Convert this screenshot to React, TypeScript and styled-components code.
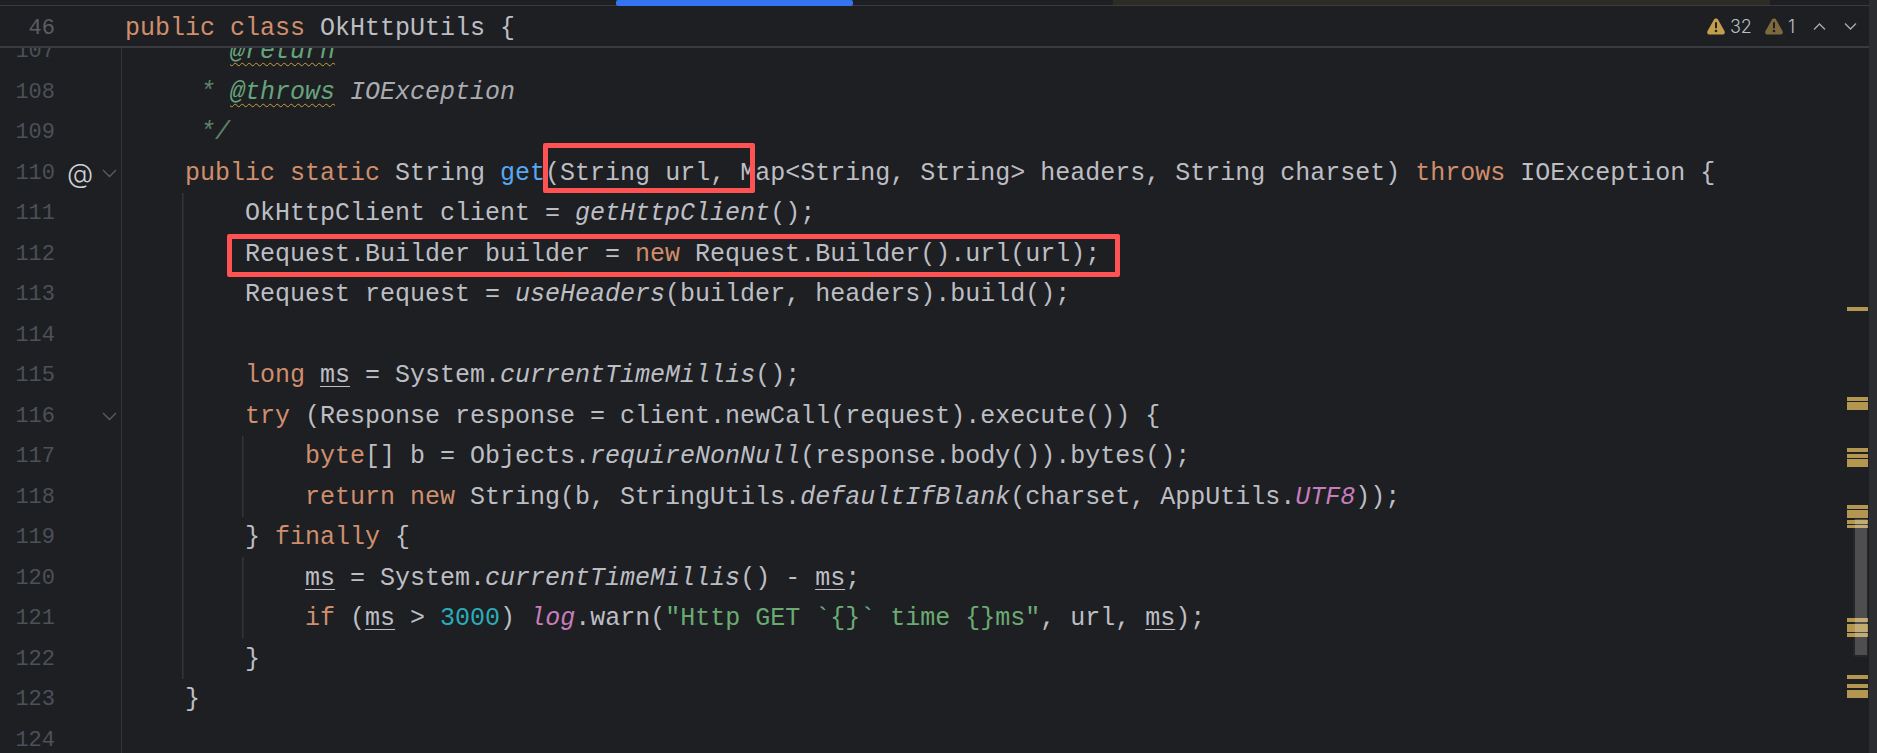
import React from 'react';
import styled, { createGlobalStyle } from 'styled-components';

type Kind = 'plain' | 'kw' | 'fn' | 'call' | 'doc' | 'tag' | 'docref' | 'num' | 'str' | 'field' | 'mut';
type Token = [Kind, string];

interface Line {
    no: number;
    tokens: Token[];
    mark?: boolean;
    fold?: boolean;
    depth?: number;
}

const LINES: Line[] = [
    { no: 107, tokens: [['doc', '     * '], ['tag', '@return']] },
    { no: 108, tokens: [['doc', '     * '], ['tag', '@throws'], ['doc', ' '], ['docref', 'IOException']] },
    { no: 109, tokens: [['doc', '     */']] },
    {
        no: 110, mark: true, fold: true, tokens: [
            ['plain', '    '], ['kw', 'public static '], ['plain', 'String '], ['fn', 'get'],
            ['plain', '(String url, Map<String, String> headers, String charset) '], ['kw', 'throws '], ['plain', 'IOException {'],
        ],
    },
    { no: 111, depth: 1, tokens: [['plain', '        OkHttpClient client = '], ['call', 'getHttpClient'], ['plain', '();']] },
    { no: 112, depth: 1, tokens: [['plain', '        Request.Builder builder = '], ['kw', 'new '], ['plain', 'Request.Builder().url(url);']] },
    { no: 113, depth: 1, tokens: [['plain', '        Request request = '], ['call', 'useHeaders'], ['plain', '(builder, headers).build();']] },
    { no: 114, depth: 1, tokens: [] },
    { no: 115, depth: 1, tokens: [['plain', '        '], ['kw', 'long '], ['mut', 'ms'], ['plain', ' = System.'], ['call', 'currentTimeMillis'], ['plain', '();']] },
    { no: 116, depth: 1, fold: true, tokens: [['plain', '        '], ['kw', 'try '], ['plain', '(Response response = client.newCall(request).execute()) {']] },
    {
        no: 117, depth: 2, tokens: [
            ['plain', '            '], ['kw', 'byte'], ['plain', '[] b = Objects.'], ['call', 'requireNonNull'], ['plain', '(response.body()).bytes();'],
        ],
    },
    {
        no: 118, depth: 2, tokens: [
            ['plain', '            '], ['kw', 'return new '], ['plain', 'String(b, StringUtils.'], ['call', 'defaultIfBlank'],
            ['plain', '(charset, AppUtils.'], ['field', 'UTF8'], ['plain', '));'],
        ],
    },
    { no: 119, depth: 1, tokens: [['plain', '        } '], ['kw', 'finally '], ['plain', '{']] },
    {
        no: 120, depth: 2, tokens: [
            ['plain', '            '], ['mut', 'ms'], ['plain', ' = System.'], ['call', 'currentTimeMillis'], ['plain', '() - '], ['mut', 'ms'], ['plain', ';'],
        ],
    },
    {
        no: 121, depth: 2, tokens: [
            ['plain', '            '], ['kw', 'if '], ['plain', '('], ['mut', 'ms'], ['plain', ' > '], ['num', '3000'], ['plain', ') '], ['field', 'log'],
            ['plain', '.warn('], ['str', '"Http GET `{}` time {}ms"'], ['plain', ', url, '], ['mut', 'ms'], ['plain', ');'],
        ],
    },
    { no: 122, depth: 1, tokens: [['plain', '        }']] },
    { no: 123, tokens: [['plain', '    }']] },
    { no: 124, tokens: [] },
    { no: 125, tokens: [] },
];

// warning stripes on the error stripe: [top, height]
const STRIPES: [number, number][] = [
    [307, 4], [397, 4], [402, 4], [406, 4], [448, 4], [454, 4], [459, 4], [463, 4],
    [505, 4], [510, 4], [514, 4], [520, 4], [525, 3], [618, 4], [624, 4], [628, 4], [633, 4],
    [675, 4], [684, 4], [690, 4], [694, 4],
];

const GlobalStyle = createGlobalStyle`
    html, body {
        margin: 0;
        height: 100%;
        background: #1e1f22;
        overflow: hidden;
    }
`;

const Page = styled.div`
    position: relative;
    width: 1877px;
    height: 753px;
    display: grid;
    grid-template-columns: 1869px 8px;
    background: #1e1f22;
    overflow: hidden;
    font-family: "Liberation Mono", monospace;
`;

const Editor = styled.div`
    display: flex;
    flex-direction: column;
    min-width: 0;
    height: 753px;
`;

const TabStrip = styled.div`
    flex: none;
    height: 5px;
    display: flex;
    border-bottom: 1px solid #393b40;
    padding-left: 616px;
`;

const ActiveTab = styled.div`
    width: 237px;
    height: 6px;
    background: #3574f0;
    border-radius: 2px;
`;

const TabGap = styled.div`
    width: 260px;
`;

const OtherTabs = styled.div`
    width: 657px;
    background: #2e2a24;
`;

const StickyHeader = styled.div`
    flex: none;
    height: 40px;
    display: flex;
    align-items: center;
    border-bottom: 2px solid #393b40;
    font-size: 25px;
`;

const HeaderNumber = styled.div`
    width: 55px;
    flex: none;
    margin-top: 5px;
    text-align: right;
    font-size: 22px;
    color: #5a5d63;
`;

const HeaderCode = styled.div`
    margin: 5px 0 0 70px;
    flex: 1;
    white-space: pre;
`;

const Inspections = styled.div`
    display: flex;
    align-items: center;
    margin-right: 12px;
    font-family: "Inter", "Liberation Sans", sans-serif;
    font-size: 18px;
    font-weight: 300;
    color: #bcbec4;
`;

const Count = styled.span`
    margin: 0 13px 0 5px;
    &:last-of-type {
        margin-right: 0;
    }
`;

const Arrow = styled.svg`
    display: block;
    margin-left: 18px;
`;

const Viewport = styled.div`
    flex: 1;
    overflow: hidden;
    min-height: 0;
`;

const Rows = styled.div`
    margin-top: -17.5px;
`;

const Row = styled.div`
    height: 40.5px;
    display: flex;
    align-items: center;
`;

const Gutter = styled.div`
    flex: none;
    width: 122px;
    height: 100%;
    display: flex;
    align-items: center;
    box-sizing: border-box;
    padding-top: 2px;
    border-right: 1.5px solid #313438;
    margin-right: 3px;
`;

const Number = styled.div`
    width: 55px;
    flex: none;
    text-align: right;
    font-size: 22px;
    color: #4b5059;
`;

const GutterMark = styled.div`
    width: 47px;
    flex: none;
    margin-left: 12px;
    font-family: "Inter", "Liberation Sans", sans-serif;
    font-size: 27px;
    font-weight: 300;
    line-height: 27px;
    color: #ced0d6;
`;

const FoldArrow = styled.svg`
    display: block;
    flex: none;
    margin-left: -12px;
`;

const Code = styled.div<{ $depth: number }>`
    flex: 1;
    height: 100%;
    box-sizing: border-box;
    padding-top: 2px;
    display: flex;
    align-items: center;
    white-space: pre;
    font-size: 25px;
    background-repeat: no-repeat;
    background-image:
        ${p => (p.$depth > 0 ? 'linear-gradient(#313438, #313438)' : 'none')},
        ${p => (p.$depth > 1 ? 'linear-gradient(#313438, #313438)' : 'none')};
    background-size: 1.5px 100%, 1.5px 100%;
    background-position: 57px 0, 117px 0;
`;

const Tok = styled.span<{ $kind: Kind }>`
    color: ${p => ({
        plain: '#bcbec4',
        kw: '#cf8e6d',
        fn: '#56a8f5',
        call: '#bcbec4',
        doc: '#5f826b',
        tag: '#67a37c',
        docref: '#a9abb1',
        num: '#2aacb8',
        str: '#6aab73',
        field: '#c77dbb',
        mut: '#bcbec4',
    }[p.$kind])};
    font-style: ${p => (['call', 'doc', 'tag', 'docref', 'field'].includes(p.$kind) ? 'italic' : 'normal')};
    text-decoration: ${p => (p.$kind === 'mut'
        ? 'underline 1px #bcbec4'
        : p.$kind === 'tag' ? 'underline wavy 1px #c4a23e' : 'none')};
    text-underline-offset: 4px;
`;

const Scrollbar = styled.div`
    background: #2b2d30;
`;

const Stripe = styled.div`
    position: absolute;
    left: 1847px;
    width: 21px;
    background: #b3964f;
`;

const ThumbHalo = styled.div`
    position: absolute;
    left: 1853px;
    top: 518px;
    width: 15px;
    height: 139px;
    background: rgba(255, 255, 255, 0.03);
    border-radius: 2px;
`;

const Thumb = styled.div`
    position: absolute;
    left: 1855px;
    top: 519px;
    width: 12px;
    height: 136px;
    background: rgba(255, 255, 255, 0.19);
`;

const RedBox = styled.div<{ $left: number; $top: number; $width: number; $height: number }>`
    position: absolute;
    left: ${p => p.$left}px;
    top: ${p => p.$top}px;
    width: ${p => p.$width}px;
    height: ${p => p.$height}px;
    box-sizing: border-box;
    border: 5px solid #ff5252;
    border-radius: 2px;
`;

function WarnIcon({ color }: { color: string }) {
    return (
        <svg width="18" height="17" viewBox="0 0 18 17">
            <path
                d="M9 0.5c1 0 1.8 0.5 2.3 1.4l6.2 11.2c1 1.8-0.2 3.4-2.1 3.4H2.6c-1.9 0-3.1-1.6-2.1-3.4L6.7 1.9C7.2 1 8 0.5 9 0.5z"
                fill={color}
            />
            <rect x="8" y="4" width="2" height="6.5" rx="1" fill="#1e1f22" />
            <circle cx="9" cy="13" r="1.3" fill="#1e1f22" />
        </svg>
    );
}

function Chevron({ up }: { up?: boolean }) {
    return (
        <Arrow width="13" height="9" viewBox="0 0 13 9">
            <path
                d={up ? 'M1 7.5L6.5 2 12 7.5' : 'M1 1.5L6.5 7 12 1.5'}
                fill="none"
                stroke="#a8aab0"
                strokeWidth="1.4"
            />
        </Arrow>
    );
}

function CodeLine({ line }: { line: Line }) {
    return (
        <Row>
            <Gutter>
                <Number>{line.no}</Number>
                <GutterMark>{line.mark ? '@' : ''}</GutterMark>
                {line.fold && (
                    <FoldArrow width="15" height="9" viewBox="0 0 15 9">
                        <path d="M1 1l6.5 6.5L14 1" fill="none" stroke="#5a5d63" strokeWidth="1.3" />
                    </FoldArrow>
                )}
            </Gutter>
            <Code $depth={line.depth || 0}>
                {line.tokens.map((t, i) => (<Tok key={i} $kind={t[0]}>{t[1]}</Tok>))}
            </Code>
        </Row>
    );
}

export default function App() {
    return (
        <Page>
            <GlobalStyle />
            <Editor>
                <TabStrip>
                    <ActiveTab />
                    <TabGap />
                    <OtherTabs />
                </TabStrip>
                <StickyHeader>
                    <HeaderNumber>46</HeaderNumber>
                    <HeaderCode>
                        <Tok $kind="kw">public class </Tok>
                        <Tok $kind="plain">OkHttpUtils {'{'}</Tok>
                    </HeaderCode>
                    <Inspections>
                        <WarnIcon color="#c29e4a" />
                        <Count>32</Count>
                        <WarnIcon color="#7d6a3c" />
                        <Count>1</Count>
                        <Chevron up />
                        <Chevron />
                    </Inspections>
                </StickyHeader>
                <Viewport>
                    <Rows>
                        {LINES.map(line => (<CodeLine key={line.no} line={line} />))}
                    </Rows>
                </Viewport>
            </Editor>
            <Scrollbar />
            {STRIPES.map(([top, height]) => (
                <Stripe key={top} style={{ top, height }} />
            ))}
            <ThumbHalo />
            <Thumb />
            <RedBox $left={543} $top={143} $width={212} $height={50} />
            <RedBox $left={227} $top={234} $width={893} $height={43} />
        </Page>
    );
}
